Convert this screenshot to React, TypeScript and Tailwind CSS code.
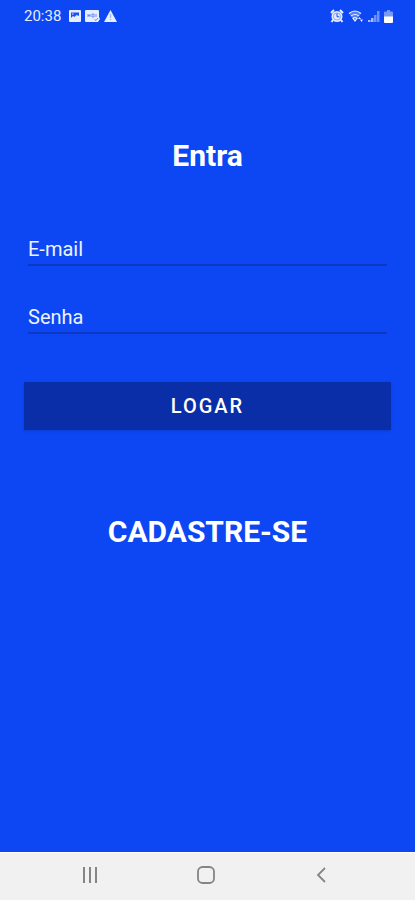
import type { ReactNode } from 'react';

interface FieldProps {
  id: string;
  type: string;
  label: string;
}

function Field({ id, type, label }: FieldProps) {
  return (
    <input
      id={id}
      type={type}
      aria-label={label}
      placeholder={label}
      className="mx-1 h-8 border-b-2 border-[#0c38c4] bg-transparent text-xl text-white outline-none placeholder:text-[#eef2ff]"
    />
  );
}

function NavButton({ label, children }: { label: string; children: ReactNode }) {
  return (
    <button type="button" aria-label={label} className="flex h-11 flex-1 items-center justify-center">
      {children}
    </button>
  );
}

function StatusBar() {
  return (
    <header className="flex h-8 items-center justify-between pr-[22px] pl-6 text-[#e6edff]">
      <div className="flex items-center gap-1">
        <span className="mr-1 text-[15px]">20:38</span>
        {/* Gallery */}
        <svg width="12" height="12" viewBox="0 0 12 12">
          <rect width="12" height="12" rx="1" fill="currentColor" />
          <path d="M2 2.500h8V6L7.500 5 5.500 7 4 6 2 8z" fill="#1c52f4" />
          <path d="M3 3.500h1.500v1H3z" fill="currentColor" />
        </svg>
        {/* Card with check */}
        <svg width="15" height="12" viewBox="0 0 15 12">
          <path d="M1 0h12a1 1 0 0 1 1 1v6l1 2-2 3H1a1 1 0 0 1-1-1V1a1 1 0 0 1 1-1z" fill="currentColor" />
          <path d="M3 4v3M5 4v3M3 5.500h2M7 4v3h2V4zM11 4v3M9.500 9.500l1.500 1 2-2.500" fill="none" stroke="#5c82f8" strokeWidth=".9" />
        </svg>
        {/* Warning */}
        <svg width="13" height="12" viewBox="0 0 13 12">
          <path d="M6.500 0 13 12H0z" fill="currentColor" />
          <path d="M6.500 4v4M6.500 9v1" stroke="#9db4fb" strokeWidth="1.300" />
        </svg>
      </div>

      <div className="flex items-center gap-1">
        {/* Alarm */}
        <svg width="14" height="14" viewBox="0 0 14 14">
          <path d="M1 4 4 1M13 4l-3-3M3 11l-1.500 2M11 11l1.500 2" stroke="currentColor" strokeWidth="2" />
          <circle cx="7" cy="7.500" r="5.500" fill="currentColor" />
          <circle cx="7" cy="7.500" r="3.600" fill="none" stroke="#0d47f3" strokeWidth=".7" opacity=".6" />
          <path d="M7 4.500v3.300h2.300" fill="none" stroke="#0d47f3" />
        </svg>
        {/* Wifi */}
        <svg width="16" height="14" viewBox="0 0 16 14">
          <path d="M1 4.500q6-5 12 0L7 12z" fill="currentColor" opacity=".35" />
          <path d="M1 4.500q6-5 12 0M3 7q4-3 8 0M5 9.300q2-1.600 4 0L7 12z" fill="none" stroke="currentColor" strokeWidth="1.200" />
          <path d="m10 10 1.500-2 1.500 2zM12 10.500h3L13.500 13z" fill="currentColor" />
        </svg>
        {/* Signal */}
        <svg width="12" height="13" viewBox="0 0 12 13">
          <path d="M0 10h2.500v2H0zM3 8h2.500v4H3z" fill="currentColor" opacity=".7" />
          <path d="M6 5h2.500v7H6zM9 1h2.500v11H9z" fill="currentColor" opacity=".45" />
        </svg>
        {/* Battery */}
        <svg width="9" height="13" viewBox="0 0 9 13">
          <path d="M3 0h3v1.500h2a1 1 0 0 1 1 1V7H0V2.500a1 1 0 0 1 1-1h2z" fill="currentColor" opacity=".5" />
          <path d="M0 6.500h9V12a1 1 0 0 1-1 1H1a1 1 0 0 1-1-1z" fill="white" />
        </svg>
      </div>
    </header>
  );
}

export default function App() {
  return (
    <div className="flex min-h-screen flex-col bg-[#0d47f3] font-['Roboto',sans-serif] text-white">
      <StatusBar />

      <main className="flex flex-1 flex-col px-6">
        <h1 className="mt-[106px] text-center text-3xl font-bold">Entra</h1>

        <form className="mt-15 flex flex-col" onSubmit={(e) => e.preventDefault()}>
          <div className="flex flex-col gap-9">
            <Field id="email" type="email" label="E-mail" />
            <Field id="senha" type="password" label="Senha" />
          </div>
          <button type="submit" className="mt-12 h-12 bg-[#0a2da8] text-xl font-medium tracking-widest shadow-sm">
            LOGAR
          </button>
        </form>

        <a href="#cadastro" className="mt-21 self-center text-3xl font-bold">
          CADASTRE-SE
        </a>
      </main>

      {/* Android navigation */}
      <nav className="flex h-12 border-t border-white bg-[#f1f1f1] pr-9 pl-8 text-[#858585]">
        <NavButton label="Recentes">
          <svg width="16" height="16" viewBox="0 0 16 16">
            <path d="M2 0v16M8 0v16M14 0v16" stroke="currentColor" strokeWidth="2" />
          </svg>
        </NavButton>
        <NavButton label="Início">
          <svg width="18" height="18" viewBox="0 0 18 18">
            <rect x="1" y="1" width="16" height="16" rx="4.500" fill="none" stroke="currentColor" strokeWidth="1.800" />
          </svg>
        </NavButton>
        <NavButton label="Voltar">
          <svg width="10" height="16" viewBox="0 0 10 16">
            <path d="M9 1 2 8l7 7" fill="none" stroke="currentColor" strokeWidth="1.800" />
          </svg>
        </NavButton>
      </nav>
    </div>
  );
}
